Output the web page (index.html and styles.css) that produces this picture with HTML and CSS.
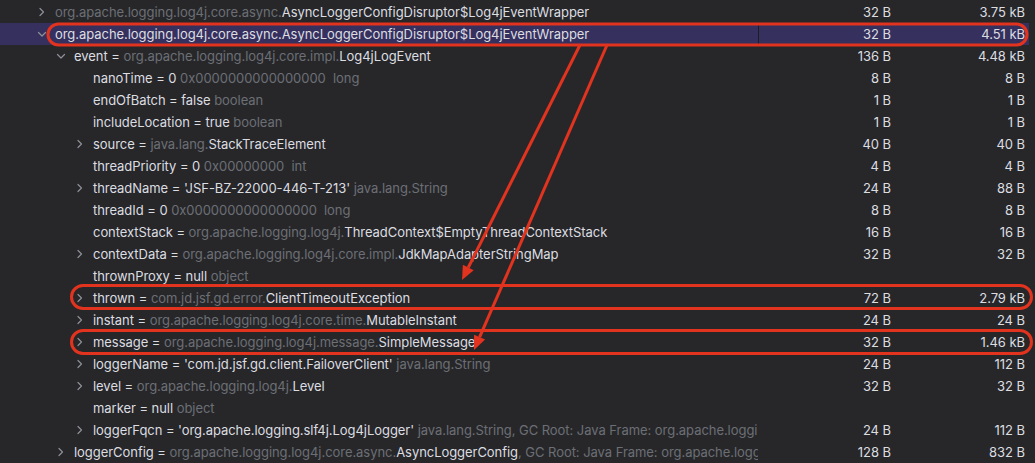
FILE: index.html
```html
<!DOCTYPE html>
<html>
<head>
<meta charset="utf-8">
<link rel="stylesheet" href="styles.css">
</head>
<body>
<div class="view">
  <div class="tree">
    <div class="row l0"><div class="name"><span class="tw"><svg class="chev" width="10" height="10" viewBox="0 0 10 10"><path d="M3 1.5 L6.5 5 L3 8.5"/></svg></span><span class="g">org.apache.logging.log4j.core.async.</span>AsyncLoggerConfigDisruptor$Log4jEventWrapper</div><div class="sh">32 B</div><div class="rt">3.75 kB</div></div>
    <div class="row l0 sel"><div class="name"><span class="tw"><svg class="chev" width="10" height="10" viewBox="0 0 10 10"><path d="M1.5 3.5 L5 7 L8.5 3.5"/></svg></span>org.apache.logging.log4j.core.async.AsyncLoggerConfigDisruptor$Log4jEventWrapper</div><div class="sh">32 B</div><div class="rt">4.51 kB</div></div>
    <div class="row l1"><div class="name"><span class="tw"><svg class="chev" width="10" height="10" viewBox="0 0 10 10"><path d="M1.5 3.5 L5 7 L8.5 3.5"/></svg></span>event = <span class="g">org.apache.logging.log4j.core.impl.</span>Log4jLogEvent</div><div class="sh">136 B</div><div class="rt">4.48 kB</div></div>
    <div class="row l2"><div class="name"><span class="tw"></span>nanoTime = 0 <span class="g">0x0000000000000000&nbsp; long</span></div><div class="sh">8 B</div><div class="rt">8 B</div></div>
    <div class="row l2"><div class="name"><span class="tw"></span>endOfBatch = false <span class="g">boolean</span></div><div class="sh">1 B</div><div class="rt">1 B</div></div>
    <div class="row l2"><div class="name"><span class="tw"></span>includeLocation = true <span class="g">boolean</span></div><div class="sh">1 B</div><div class="rt">1 B</div></div>
    <div class="row l2"><div class="name"><span class="tw"><svg class="chev" width="10" height="10" viewBox="0 0 10 10"><path d="M3 1.5 L6.5 5 L3 8.5"/></svg></span>source = <span class="g">java.lang.</span>StackTraceElement</div><div class="sh">40 B</div><div class="rt">40 B</div></div>
    <div class="row l2"><div class="name"><span class="tw"></span>threadPriority = 0 <span class="g">0x00000000&nbsp; int</span></div><div class="sh">4 B</div><div class="rt">4 B</div></div>
    <div class="row l2"><div class="name"><span class="tw"><svg class="chev" width="10" height="10" viewBox="0 0 10 10"><path d="M3 1.5 L6.5 5 L3 8.5"/></svg></span>threadName = 'JSF-BZ-22000-446-T-213' <span class="g">java.lang.String</span></div><div class="sh">24 B</div><div class="rt">88 B</div></div>
    <div class="row l2"><div class="name"><span class="tw"></span>threadId = 0 <span class="g">0x0000000000000000&nbsp; long</span></div><div class="sh">8 B</div><div class="rt">8 B</div></div>
    <div class="row l2"><div class="name"><span class="tw"></span>contextStack = <span class="g">org.apache.logging.log4j.</span>ThreadContext$EmptyThreadContextStack</div><div class="sh">16 B</div><div class="rt">16 B</div></div>
    <div class="row l2"><div class="name"><span class="tw"><svg class="chev" width="10" height="10" viewBox="0 0 10 10"><path d="M3 1.5 L6.5 5 L3 8.5"/></svg></span>contextData = <span class="g">org.apache.logging.log4j.core.impl.</span>JdkMapAdapterStringMap</div><div class="sh">32 B</div><div class="rt">32 B</div></div>
    <div class="row l2"><div class="name"><span class="tw"></span>thrownProxy = null <span class="g">object</span></div><div class="sh"></div><div class="rt"></div></div>
    <div class="row l2"><div class="name"><span class="tw"><svg class="chev" width="10" height="10" viewBox="0 0 10 10"><path d="M3 1.5 L6.5 5 L3 8.5"/></svg></span>thrown = <span class="g">com.jd.jsf.gd.error.</span>ClientTimeoutException</div><div class="sh">72 B</div><div class="rt">2.79 kB</div></div>
    <div class="row l2"><div class="name"><span class="tw"><svg class="chev" width="10" height="10" viewBox="0 0 10 10"><path d="M3 1.5 L6.5 5 L3 8.5"/></svg></span>instant = <span class="g">org.apache.logging.log4j.core.time.</span>MutableInstant</div><div class="sh">24 B</div><div class="rt">24 B</div></div>
    <div class="row l2"><div class="name"><span class="tw"><svg class="chev" width="10" height="10" viewBox="0 0 10 10"><path d="M3 1.5 L6.5 5 L3 8.5"/></svg></span>message = <span class="g">org.apache.logging.log4j.message.</span>SimpleMessage</div><div class="sh">32 B</div><div class="rt">1.46 kB</div></div>
    <div class="row l2"><div class="name"><span class="tw"><svg class="chev" width="10" height="10" viewBox="0 0 10 10"><path d="M3 1.5 L6.5 5 L3 8.5"/></svg></span>loggerName = 'com.jd.jsf.gd.client.FailoverClient' <span class="g">java.lang.String</span></div><div class="sh">24 B</div><div class="rt">112 B</div></div>
    <div class="row l2"><div class="name"><span class="tw"><svg class="chev" width="10" height="10" viewBox="0 0 10 10"><path d="M3 1.5 L6.5 5 L3 8.5"/></svg></span>level = <span class="g">org.apache.logging.log4j.</span>Level</div><div class="sh">32 B</div><div class="rt">32 B</div></div>
    <div class="row l2"><div class="name"><span class="tw"></span>marker = null <span class="g">object</span></div><div class="sh"></div><div class="rt"></div></div>
    <div class="row l2"><div class="name"><span class="tw"><svg class="chev" width="10" height="10" viewBox="0 0 10 10"><path d="M3 1.5 L6.5 5 L3 8.5"/></svg></span>loggerFqcn = 'org.apache.logging.slf4j.Log4jLogger' <span class="g">java.lang.String, GC Root: Java Frame: org.apache.loggi</span></div><div class="sh">24 B</div><div class="rt">112 B</div></div>
    <div class="row l1"><div class="name"><span class="tw"><svg class="chev" width="10" height="10" viewBox="0 0 10 10"><path d="M3 1.5 L6.5 5 L3 8.5"/></svg></span>loggerConfig = <span class="g">org.apache.logging.log4j.core.async.</span>AsyncLoggerConfig<span class="g">, GC Root: Java Frame: org.apache.logg</span></div><div class="sh">128 B</div><div class="rt">832 B</div></div>
  </div>
  <svg class="marks" width="1035" height="463" viewBox="0 0 1035 463">
    <g fill="none" stroke="#e2331f" stroke-width="3">
      <rect x="48" y="24" width="979" height="21" rx="10.5"/>
      <rect x="71.5" y="285.5" width="960" height="23" rx="11.5"/>
      <rect x="71.5" y="330.5" width="960" height="23" rx="11.5"/>
      <line x1="580" y1="45" x2="468.3" y2="267.5"/>
      <line x1="607" y1="45" x2="479.6" y2="337.2"/>
    </g>
    <g fill="#e2331f">
      <polygon points="462,280 473.7,270.2 462.9,264.8"/>
      <polygon points="474,350 485.1,339.6 474.1,334.8"/>
    </g>
  </svg>
</div>
</body>
</html>
```

FILE: styles.css
```css
html, body {
  margin: 0;
  padding: 0;
  background: #27272a;
}
.view {
  position: relative;
  width: 1035px;
  height: 463px;
  overflow: hidden;
  background: #27272a;
  font-family: Inter, "Noto Sans", sans-serif;
  font-size: 13px;
  letter-spacing: -0.05px;
  color: #dcdde0;
}
.tree {
  display: flex;
  flex-direction: column;
  padding-top: 1px;
  width: 1029px;
}
.row {
  display: flex;
  height: 22px;
  line-height: 22px;
  white-space: nowrap;
}
.row.sel {
  background: #36305f;
}
.name {
  width: 759px;
  border-right: 1px solid transparent;
  overflow: hidden;
  display: flex;
  align-items: center;
  box-sizing: border-box;
  white-space: pre;
}
.row.sel .name {
  border-right-color: #1d1c22;
}
.l0 .name { padding-left: 36px; }
.l1 .name { padding-left: 55px; }
.l2 .name { padding-left: 74px; }
.tw {
  flex: 0 0 19px;
  width: 19px;
  height: 22px;
  display: flex;
  align-items: center;
}
.chev {
  margin-left: 1px;
}
.chev path {
  fill: none;
  stroke: #8d9096;
  stroke-width: 1.2;
  stroke-linecap: round;
  stroke-linejoin: round;
}
.g {
  color: #6c6f75;
  white-space: pre;
}
.sh {
  width: 132px;
  text-align: right;
}
.rt {
  width: 134px;
  text-align: right;
}
.marks {
  position: absolute;
  left: 0;
  top: 0;
  pointer-events: none;
}
```
